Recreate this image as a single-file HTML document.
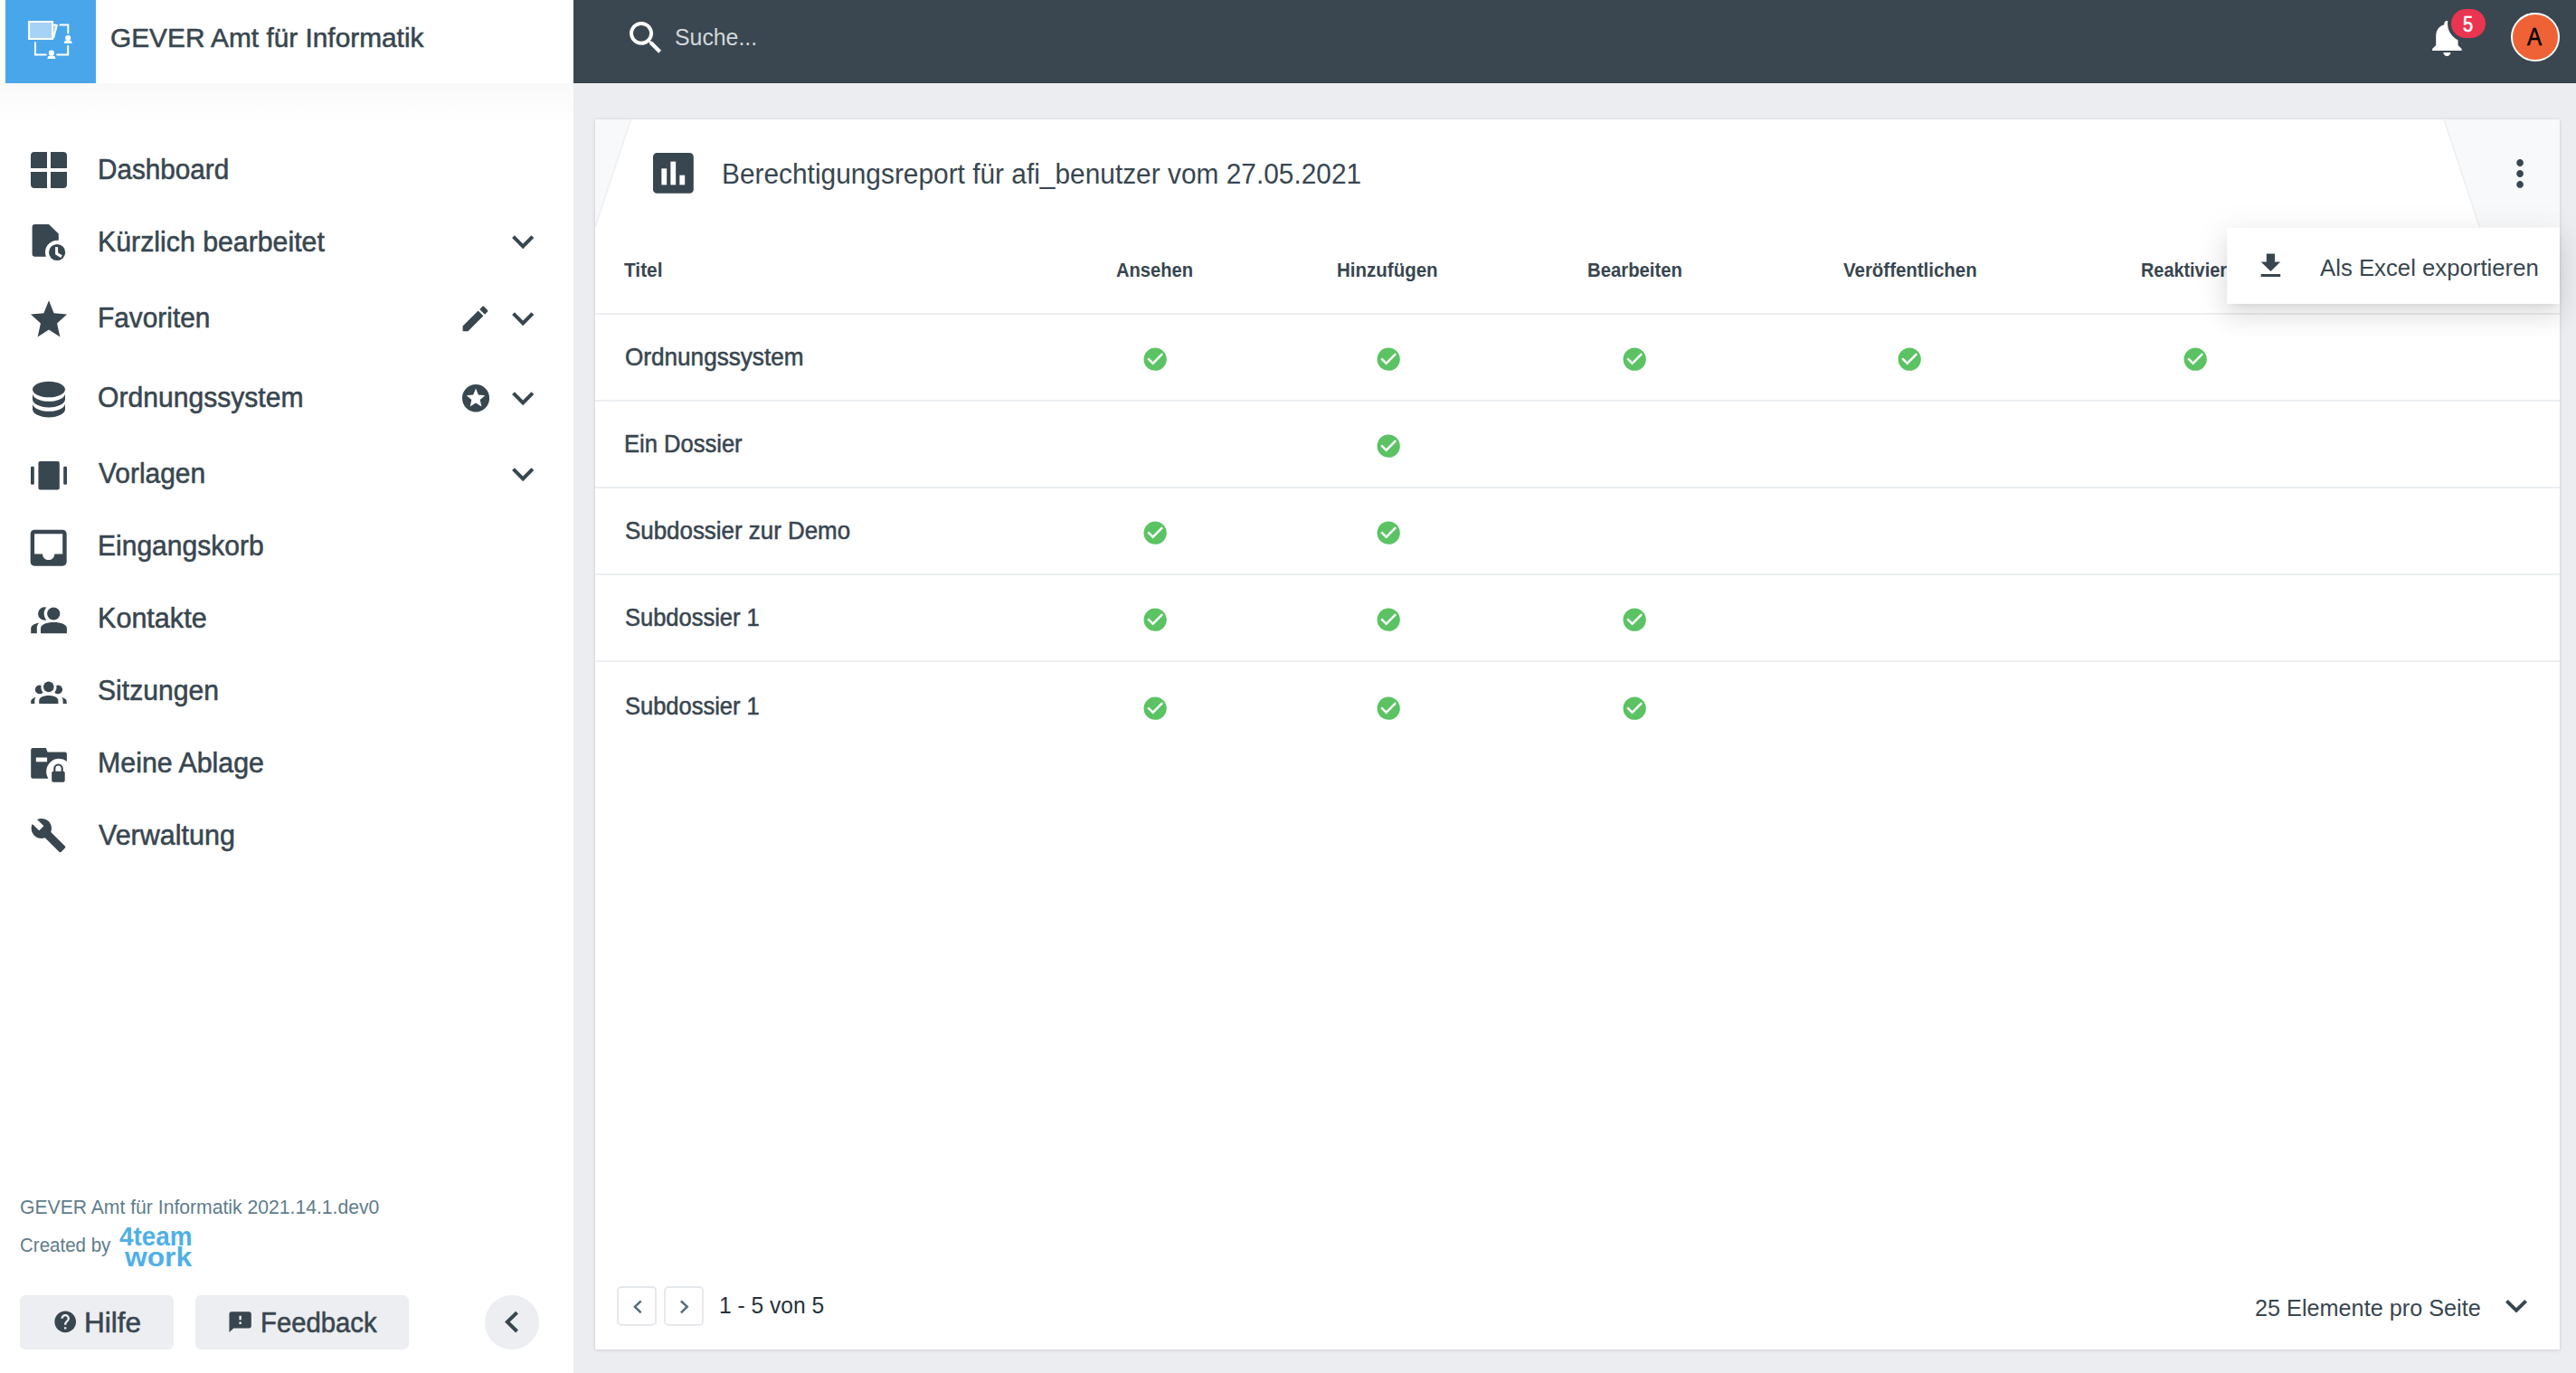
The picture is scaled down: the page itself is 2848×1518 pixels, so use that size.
<!DOCTYPE html>
<html><head><meta charset="utf-8">
<style>
*{margin:0;padding:0;box-sizing:border-box}
html,body{width:2848px;height:1518px;overflow:hidden;background:#ecedf0;font-family:"Liberation Sans",sans-serif;color:#38464f}
.t{position:absolute;white-space:nowrap;line-height:1}
.m{-webkit-text-stroke:0.55px currentColor}
svg{position:absolute;display:block;overflow:visible}
.bx{position:absolute}
</style></head><body>
<div class="bx" style="left:0;top:0;width:634px;height:1518px;background:#fff"></div>
<div class="bx" style="left:0;top:92px;width:634px;height:44px;background:linear-gradient(rgba(0,0,0,.022),rgba(0,0,0,0))"></div>
<div class="bx" style="left:6px;top:0;width:100px;height:92px;background:#4aa6ea"></div>
<svg style="left:26px;top:18px" width="60" height="54" viewBox="0 0 60 54" fill="#fff">
<path d="M6.1 6.1h25.9v18.9H6.1z" fill="#a6d2f5"/>
<path d="M33 9.4l3.6 0.8-3.6 13.4z" fill="#a6d2f5"/>
<path d="M6.1 6.1h25.9v18.9H6.1z" fill="none" stroke="#fff" stroke-width="2"/>
<path d="M33 9.3l3.8 0.8L33 24.6" fill="none" stroke="#fff" stroke-width="2" stroke-linejoin="miter"/>
<path d="M40.5 9.5h8.8v9" fill="none" stroke="#fff" stroke-width="2" stroke-linecap="round"/>
<path d="M49.2 33v9.6h-12" fill="none" stroke="#fff" stroke-width="2" stroke-linecap="round"/>
<path d="M13 29.3v13.3h11.8" fill="none" stroke="#fff" stroke-width="2" stroke-linecap="round"/>
<circle cx="49.2" cy="24" r="3.1" fill="#fff"/>
<path d="M45.8 27.1h6.8l1.3 3h-9.4z" fill="#fff"/>
<circle cx="30.9" cy="40.7" r="3.1" fill="#fff"/>
<path d="M27.5 44h6.8l1.3 3h-9.4z" fill="#fff"/>
</svg>
<div class="t m" id="hdr" style="left:122.01px;top:27.40px;font-size:30px;transform:scaleX(0.9943);transform-origin:0 0;">GEVER Amt für Informatik</div>
<div class="t m" id="n1" style="left:108.07px;top:172.81px;font-size:30.7px;transform:scaleX(0.9673);transform-origin:0 0;">Dashboard</div>
<div class="t m" id="n2" style="left:108.03px;top:253.31px;font-size:30.7px;transform:scaleX(0.9870);transform-origin:0 0;">Kürzlich bearbeitet</div>
<div class="t m" id="n3" style="left:108.05px;top:336.76px;font-size:30.7px;transform:scaleX(0.9728);transform-origin:0 0;">Favoriten</div>
<div class="t m" id="n4" style="left:108.40px;top:425.01px;font-size:30.7px;transform:scaleX(0.9809);transform-origin:0 0;">Ordnungssystem</div>
<div class="t m" id="n5" style="left:109.37px;top:509.01px;font-size:30.7px;transform:scaleX(0.9752);transform-origin:0 0;">Vorlagen</div>
<div class="t m" id="n6" style="left:108.04px;top:589.01px;font-size:30.7px;transform:scaleX(0.9789);transform-origin:0 0;">Eingangskorb</div>
<div class="t m" id="n7" style="left:108.01px;top:669.01px;font-size:30.7px;transform:scaleX(0.9958);transform-origin:0 0;">Kontakte</div>
<div class="t m" id="n8" style="left:108.40px;top:749.21px;font-size:30.7px;transform:scaleX(0.9813);transform-origin:0 0;">Sitzungen</div>
<div class="t m" id="n9" style="left:108.02px;top:829.01px;font-size:30.7px;transform:scaleX(0.9891);transform-origin:0 0;">Meine Ablage</div>
<div class="t m" id="n10" style="left:109.38px;top:908.61px;font-size:30.7px;transform:scaleX(0.9934);transform-origin:0 0;">Verwaltung</div>
<svg style="left:34px;top:168px" width="40" height="40" viewBox="0 0 40 40" fill="#38464f"><path d="M4 0h14v18H0V4a4 4 0 0 1 4-4zM22 0h14a4 4 0 0 1 4 4v14H22zM0 22h18v18H4a4 4 0 0 1-4-4zM22 22h18v14a4 4 0 0 1-4 4H22z"/></svg>
<svg style="left:30px;top:244px" width="50" height="50" viewBox="0 0 50 50" fill="#38464f"><path d="M8.5 4H24L34.8 14.6V21.8A13.2 13.2 0 0 0 20.9 39.7H8.5A2.9 2.9 0 0 1 5.6 36.8V6.9A2.9 2.9 0 0 1 8.5 4Z"/>
<circle cx="33.1" cy="35" r="9.1"/>
<path d="M32.6 29V36.4L38 39.6" fill="none" stroke="#fff" stroke-width="3"/></svg>
<svg style="left:30.00px;top:327.57px;" width="48.00" height="50.78" viewBox="0 0 24 24" preserveAspectRatio="none" fill="#38464f"><path d="M12 17.27L18.18 21l-1.64-7.03L22 9.24l-7.19-.61L12 2 9.19 8.63 2 9.24l5.46 4.73L5.82 21z"/></svg>
<svg style="left:27.00px;top:415.27px;" width="54.00" height="53.07" viewBox="0 0 24 24" preserveAspectRatio="none" fill="#38464f"><path d="M12,3C7.58,3 4,4.79 4,7C4,9.21 7.58,11 12,11C16.42,11 20,9.21 20,7C20,4.79 16.42,3 12,3M4,9V12C4,14.21 7.58,16 12,16C16.42,16 20,14.21 20,12V9C20,11.21 16.42,13 12,13C7.58,13 4,11.21 4,9M4,14V17C4,19.21 7.58,21 12,21C16.42,21 20,19.21 20,17V14C20,16.21 16.42,18 12,18C7.58,18 4,16.21 4,14Z"/></svg>
<svg style="left:34px;top:510px" width="40" height="32" viewBox="0 0 40 32" fill="#38464f"><rect x="8.4" y="0" width="23.4" height="31.6" rx="2"/><rect x="0" y="5.7" width="3.8" height="20.1" rx="1.2"/><rect x="36.2" y="5.7" width="3.8" height="20.1" rx="1.2"/></svg>
<svg style="left:27.33px;top:579.12px;" width="53.33" height="53.47" viewBox="0 0 24 24" preserveAspectRatio="none" fill="#38464f"><path d="M19 3H4.99c-1.11 0-1.98.89-1.98 2L3 19c0 1.1.88 2 1.99 2H19c1.1 0 2-.9 2-2V5c0-1.11-.9-2-2-2zm0 12h-4c0 1.66-1.35 3-3 3s-3-1.34-3-3H4.99V5H19v10z"/></svg>
<svg style="left:34px;top:668px" width="44" height="36" viewBox="0 0 44 36" fill="#38464f">
<circle cx="25.25" cy="10.5" r="7.1"/>
<path d="M17.16 3.62A7.2 7.2 0 1 0 17.16 17.48A10.65 10.65 0 0 1 17.16 3.62Z"/>
<path d="M11 32.2v-5.5c0-4.5 6.4-6.8 14.45-6.8S39.9 22.2 39.9 26.7v5.5z"/>
<path d="M0.2 32.2v-5c0-3 2.5-5.3 9.2-6.6c-1.9 1.7-2.6 3.6-2.6 6v5.6z"/>
</svg>
<svg style="left:34px;top:748px" width="44" height="32" viewBox="0 0 44 32" fill="#38464f">
<circle cx="19.8" cy="11.4" r="5.8"/>
<path d="M8 9.8a4.9 4.9 0 1 0 5.6 7.6a8 8 0 0 1-1.9-7.4a4.9 4.9 0 0 0-3.7-0.2z"/>
<path d="M31.9 9.8a4.9 4.9 0 1 1-5.6 7.6a8 8 0 0 0 1.9-7.4a4.9 4.9 0 0 1 3.7-0.2z"/>
<path d="M9.2 29.9v-3.5c0-3.4 4.8-5.5 10.6-5.5s10.6 2.1 10.6 5.5v3.5z"/>
<path d="M0.2 29.9v-2.4c0-2.2 2-3.6 5.5-4.7c-0.9 1.2-1.4 2.6-1.4 4.2v2.9z"/>
<path d="M39.7 29.9v-2.4c0-2.2-2-3.6-5.5-4.7c0.9 1.2 1.4 2.6 1.4 4.2v2.9z"/>
</svg>
<svg style="left:34px;top:826px" width="44" height="40" viewBox="0 0 44 40" fill="#38464f">
<path d="M2.2 1.1h14.6l1.8 4.3h19.3a2 2 0 0 1 2 2v8.3a14.2 14.2 0 0 0-20.5 19h-17.2a2 2 0 0 1-2-2V3.1a2 2 0 0 1 2-2z"/>
<rect x="5.8" y="11.5" width="12.3" height="4.8" fill="#fff"/>
<rect x="23.2" y="26.7" width="14.5" height="12" rx="1.8"/>
<path d="M26.3 27v-3.3a4.2 4.2 0 0 1 8.4 0v3.3" fill="none" stroke="#38464f" stroke-width="2.2"/>
</svg>
<svg style="left:33.12px;top:903.12px;" width="41.08" height="40.97" viewBox="0 0 24 24" preserveAspectRatio="none" fill="#38464f"><path d="M22.7 19l-9.1-9.1c.9-2.3.4-5-1.5-6.9-2-2-5-2.4-7.4-1.3L9 6 6 9 1.6 4.7C.4 7.1.9 10.1 2.9 12.1c1.9 1.9 4.6 2.4 6.9 1.5l9.1 9.1c.4.4 1 .4 1.4 0l2.3-2.3c.5-.4.5-1.1.1-1.4z"/></svg>
<svg style="left:553.90px;top:243.48px;" width="48.40" height="48.26" viewBox="0 0 24 24" preserveAspectRatio="none" fill="#38464f"><path d="M16.59 8.59L12 13.17 7.41 8.59 6 10l6 6 6-6z"/></svg>
<svg style="left:553.90px;top:327.78px;" width="48.40" height="48.26" viewBox="0 0 24 24" preserveAspectRatio="none" fill="#38464f"><path d="M16.59 8.59L12 13.17 7.41 8.59 6 10l6 6 6-6z"/></svg>
<svg style="left:553.90px;top:416.08px;" width="48.40" height="48.26" viewBox="0 0 24 24" preserveAspectRatio="none" fill="#38464f"><path d="M16.59 8.59L12 13.17 7.41 8.59 6 10l6 6 6-6z"/></svg>
<svg style="left:553.90px;top:499.78px;" width="48.40" height="48.26" viewBox="0 0 24 24" preserveAspectRatio="none" fill="#38464f"><path d="M16.59 8.59L12 13.17 7.41 8.59 6 10l6 6 6-6z"/></svg>
<svg style="left:507.38px;top:333.68px;" width="36.95" height="36.93" viewBox="0 0 24 24" preserveAspectRatio="none" fill="#38464f"><path d="M3 17.25V21h3.75L17.81 9.94l-3.75-3.75L3 17.25zM20.71 7.04c.39-.39.39-1.02 0-1.41l-2.34-2.34c-.39-.39-1.02-.39-1.41 0l-1.83 1.83 3.75 3.75 1.83-1.83z"/></svg>
<svg style="left:507.79px;top:421.85px;" width="36.12" height="36.60" viewBox="0 0 24 24" preserveAspectRatio="none" fill="#38464f"><path d="M16.23,18L12,15.45L7.77,18L8.89,13.19L5.16,9.96L10.08,9.54L12,5L13.92,9.53L18.84,9.95L15.11,13.18L16.23,18M12,2C6.47,2 2,6.5 2,12A10,10 0 0,0 12,22A10,10 0 0,0 22,12A10,10 0 0,0 12,2Z"/></svg>
<div class="t" id="ver" style="left:22.04px;top:1324.08px;font-size:22px;transform:scaleX(0.9612);transform-origin:0 0;color:#607d8b">GEVER Amt für Informatik 2021.14.1.dev0</div>
<div class="t" id="cby" style="left:22.07px;top:1365.88px;font-size:22px;transform:scaleX(0.9318);transform-origin:0 0;color:#607d8b">Created by</div>
<div class="t" id="l4t" style="left:132.00px;top:1351.61px;font-size:30px;transform:scaleX(0.9282);transform-origin:0 0;color:#4fb0e5;font-weight:bold">4team</div>
<div class="t" id="lwk" style="left:137.78px;top:1374.61px;font-size:30px;transform:scaleX(1.0586);transform-origin:0 0;color:#4fb0e5;font-weight:bold">work</div>
<div class="bx" style="left:22px;top:1432px;width:170px;height:60px;background:#eceef1;border-radius:6px"></div>
<div class="bx" style="left:216px;top:1432px;width:236px;height:60px;background:#eceef1;border-radius:6px"></div>
<div class="bx" style="left:536px;top:1432px;width:60px;height:60px;background:#eceef1;border-radius:50%"></div>
<svg style="left:57.63px;top:1447.42px;" width="28.44" height="28.56" viewBox="0 0 24 24" preserveAspectRatio="none" fill="#38464f"><path d="M12 2C6.48 2 2 6.48 2 12s4.48 10 10 10 10-4.48 10-10S17.52 2 12 2zm1 17h-2v-2h2v2zm2.07-7.75l-.9.92C13.45 12.9 13 13.5 13 15h-2v-.5c0-1.1.45-2.1 1.17-2.83l1.24-1.26c.37-.36.59-.86.59-1.41 0-1.1-.9-2-2-2s-2 .9-2 2H8c0-2.21 1.79-4 4-4s4 1.79 4 4c0 .88-.36 1.68-.93 2.25z"/></svg>
<svg style="left:251.36px;top:1448.03px;" width="29.28" height="27.24" viewBox="0 0 24 24" preserveAspectRatio="none" fill="#38464f"><path d="M20 2H4c-1.1 0-1.99.9-1.99 2L2 22l4-4h14c1.1 0 2-.9 2-2V4c0-1.1-.9-2-2-2zm-7 12h-2v-2h2v2zm0-4h-2V6h2v4z"/></svg>
<svg style="left:541.91px;top:1438.20px;" width="48.26" height="47.20" viewBox="0 0 24 24" preserveAspectRatio="none" fill="#38464f"><path d="M15.41 7.41L14 6l-6 6 6 6 1.41-1.41L10.83 12z"/></svg>
<div class="t m" id="hlf" style="left:93.31px;top:1446.93px;font-size:30.5px;transform:scaleX(1.0345);transform-origin:0 0;">Hilfe</div>
<div class="t m" id="fdb" style="left:288.25px;top:1446.93px;font-size:30.5px;transform:scaleX(0.9602);transform-origin:0 0;">Feedback</div>
<div class="bx" style="left:634px;top:0;width:2214px;height:92px;background:#3a4750;border-bottom:1px solid #334047"></div>
<div class="bx" style="left:634px;top:92px;width:2214px;height:1px;background:#f3f4f6"></div>
<svg style="left:689.58px;top:17.85px;" width="48.16" height="47.62" viewBox="0 0 24 24" preserveAspectRatio="none" fill="#fff"><path d="M15.5 14h-.79l-.28-.27C15.41 12.59 16 11.11 16 9.5 16 5.91 13.09 3 9.5 3S3 5.91 3 9.5 5.91 16 9.5 16c1.61 0 3.09-.59 4.23-1.57l.27.28v.79l5 4.99L20.49 19l-4.99-5zm-6 0C7.01 14 5 11.99 5 9.5S7.01 5 9.5 5 14 7.01 14 9.5 11.99 14 9.5 14z"/></svg>
<div class="t" id="srch" style="left:746.06px;top:28.37px;font-size:26.5px;transform:scaleX(0.9372);transform-origin:0 0;color:#d3d7da">Suche...</div>
<svg style="left:2681.38px;top:18.00px;" width="48.75" height="48.00" viewBox="0 0 24 24" preserveAspectRatio="none" fill="#fff"><path d="M12 22c1.1 0 2-.9 2-2h-4c0 1.1.89 2 2 2zm6-6v-5c0-3.07-1.64-5.64-4.5-6.32V4c0-.83-.67-1.5-1.5-1.5s-1.5.67-1.5 1.5v.68C7.63 5.36 6 7.92 6 11v5l-2 2v1h16v-1l-2-2z"/></svg>
<div class="bx" style="left:2706px;top:5.6px;width:46px;height:40.4px;background:#ea3550;border:4px solid #3a4750;border-radius:20px"></div>
<div class="t m" id="bdg" style="left:2723.08px;top:14.88px;font-size:24px;transform:scaleX(0.8308);transform-origin:0 0;color:#fff">5</div>
<div class="bx" style="left:2776px;top:13.8px;width:54px;height:54px;background:#ee6236;border:2.5px solid #fff;border-radius:50%"></div>
<div class="t m" id="av" style="left:2793.89px;top:28.04px;font-size:27px;transform:scaleX(0.8900);transform-origin:0 0;color:#000">A</div>
<div class="bx" style="left:658px;top:132px;width:2172px;height:1360px;background:#fff;box-shadow:0 1px 4px rgba(0,0,0,.10),0 0 2px rgba(0,0,0,.08)"></div>
<svg style="left:658px;top:132px" width="2172" height="120" viewBox="0 0 2172 120" fill="#38464f">
<path d="M0 0H39.5L0 119z" fill="#f8f9fb"/>
<path d="M39.5 0L0 119" stroke="#eceff2" stroke-width="1.5" fill="none"/>
<path d="M2044 0H2172V119H2083.5z" fill="#f8f9fb"/>
<path d="M2044 0L2083.5 119" stroke="#eceff2" stroke-width="1.5" fill="none"/>
</svg>
<svg style="left:721.65px;top:169.4px" width="45" height="45" viewBox="0 0 45 45" fill="#38464f"><path d="M4.4 0h36a4.4 4.4 0 0 1 4.4 4.4v36a4.4 4.4 0 0 1-4.4 4.4h-36A4.4 4.4 0 0 1 0 40.4v-36A4.4 4.4 0 0 1 4.4 0z"/><rect x="9.35" y="17.3" width="5.8" height="18.1" fill="#fff"/><rect x="19.35" y="9.6" width="5.8" height="25.8" fill="#fff"/><rect x="29.35" y="24.7" width="5.8" height="10.7" fill="#fff"/></svg>
<div class="t" id="ttl" style="left:798.45px;top:176.56px;font-size:31px;transform:scaleX(0.9632);transform-origin:0 0;">Berechtigungsreport für afi_benutzer vom 27.05.2021</div>
<svg style="left:2762.90px;top:168.03px;" width="46.20" height="47.85" viewBox="0 0 24 24" preserveAspectRatio="none" fill="#38464f"><path d="M12 8c1.1 0 2-.9 2-2s-.9-2-2-2-2 .9-2 2 .9 2 2 2zm0 2c-1.1 0-2 .9-2 2s.9 2 2 2 2-.9 2-2-.9-2-2-2zm0 6c-1.1 0-2 .9-2 2s.9 2 2 2 2-.9 2-2-.9-2-2-2z"/></svg>
<div class="t" id="h0" style="left:690.38px;top:288.70px;font-size:21.5px;transform:scaleX(0.9698);transform-origin:0 0;font-weight:bold">Titel</div>
<div class="t" id="h1" style="left:1234.44px;top:288.70px;font-size:21.5px;transform:scaleX(0.9371);transform-origin:0 0;font-weight:bold">Ansehen</div>
<div class="t" id="h2" style="left:1478.26px;top:288.70px;font-size:21.5px;transform:scaleX(0.9539);transform-origin:0 0;font-weight:bold">Hinzufügen</div>
<div class="t" id="h3" style="left:1755.08px;top:288.70px;font-size:21.5px;transform:scaleX(0.9440);transform-origin:0 0;font-weight:bold">Bearbeiten</div>
<div class="t" id="h4" style="left:2038.16px;top:288.70px;font-size:21.5px;transform:scaleX(0.9510);transform-origin:0 0;font-weight:bold">Veröffentlichen</div>
<div class="t" id="h5" style="left:2367.45px;top:288.70px;font-size:21.5px;transform:scaleX(0.9238);transform-origin:0 0;font-weight:bold">Reaktivieren</div>
<div class="bx" style="left:658px;top:345.5px;width:2172px;height:2px;background:#eceff1"></div>
<div class="t m" id="r0" style="left:691.02px;top:381.94px;font-size:27px;transform:scaleX(0.9675);transform-origin:0 0;">Ordnungssystem</div>
<div class="bx" style="left:658px;top:441.5px;width:2172px;height:2px;background:#eceff1"></div>
<svg style="left:1262.02px;top:381.72px;" width="30.36" height="30.36" viewBox="0 0 24 24" preserveAspectRatio="none" fill="#5bc363"><path d="M12 2C6.48 2 2 6.48 2 12s4.48 10 10 10 10-4.48 10-10S17.52 2 12 2zm-2 15l-5-5 1.41-1.41L10 14.17l7.59-7.59L19 8l-9 9z"/></svg>
<svg style="left:1519.72px;top:381.72px;" width="30.36" height="30.36" viewBox="0 0 24 24" preserveAspectRatio="none" fill="#5bc363"><path d="M12 2C6.48 2 2 6.48 2 12s4.48 10 10 10 10-4.48 10-10S17.52 2 12 2zm-2 15l-5-5 1.41-1.41L10 14.17l7.59-7.59L19 8l-9 9z"/></svg>
<svg style="left:1791.72px;top:381.72px;" width="30.36" height="30.36" viewBox="0 0 24 24" preserveAspectRatio="none" fill="#5bc363"><path d="M12 2C6.48 2 2 6.48 2 12s4.48 10 10 10 10-4.48 10-10S17.52 2 12 2zm-2 15l-5-5 1.41-1.41L10 14.17l7.59-7.59L19 8l-9 9z"/></svg>
<svg style="left:2096.02px;top:381.72px;" width="30.36" height="30.36" viewBox="0 0 24 24" preserveAspectRatio="none" fill="#5bc363"><path d="M12 2C6.48 2 2 6.48 2 12s4.48 10 10 10 10-4.48 10-10S17.52 2 12 2zm-2 15l-5-5 1.41-1.41L10 14.17l7.59-7.59L19 8l-9 9z"/></svg>
<svg style="left:2411.52px;top:381.72px;" width="30.36" height="30.36" viewBox="0 0 24 24" preserveAspectRatio="none" fill="#5bc363"><path d="M12 2C6.48 2 2 6.48 2 12s4.48 10 10 10 10-4.48 10-10S17.52 2 12 2zm-2 15l-5-5 1.41-1.41L10 14.17l7.59-7.59L19 8l-9 9z"/></svg>
<div class="t m" id="r1" style="left:690.08px;top:477.94px;font-size:27px;transform:scaleX(0.9460);transform-origin:0 0;">Ein Dossier</div>
<div class="bx" style="left:658px;top:537.5px;width:2172px;height:2px;background:#eceff1"></div>
<svg style="left:1519.72px;top:477.72px;" width="30.36" height="30.36" viewBox="0 0 24 24" preserveAspectRatio="none" fill="#5bc363"><path d="M12 2C6.48 2 2 6.48 2 12s4.48 10 10 10 10-4.48 10-10S17.52 2 12 2zm-2 15l-5-5 1.41-1.41L10 14.17l7.59-7.59L19 8l-9 9z"/></svg>
<div class="t m" id="r2" style="left:691.02px;top:573.94px;font-size:27px;transform:scaleX(0.9595);transform-origin:0 0;">Subdossier zur Demo</div>
<div class="bx" style="left:658px;top:633.5px;width:2172px;height:2px;background:#eceff1"></div>
<svg style="left:1262.02px;top:573.72px;" width="30.36" height="30.36" viewBox="0 0 24 24" preserveAspectRatio="none" fill="#5bc363"><path d="M12 2C6.48 2 2 6.48 2 12s4.48 10 10 10 10-4.48 10-10S17.52 2 12 2zm-2 15l-5-5 1.41-1.41L10 14.17l7.59-7.59L19 8l-9 9z"/></svg>
<svg style="left:1519.72px;top:573.72px;" width="30.36" height="30.36" viewBox="0 0 24 24" preserveAspectRatio="none" fill="#5bc363"><path d="M12 2C6.48 2 2 6.48 2 12s4.48 10 10 10 10-4.48 10-10S17.52 2 12 2zm-2 15l-5-5 1.41-1.41L10 14.17l7.59-7.59L19 8l-9 9z"/></svg>
<div class="t m" id="r3" style="left:691.03px;top:669.94px;font-size:27px;transform:scaleX(0.9439);transform-origin:0 0;">Subdossier 1</div>
<div class="bx" style="left:658px;top:729.5px;width:2172px;height:2px;background:#eceff1"></div>
<svg style="left:1262.02px;top:669.72px;" width="30.36" height="30.36" viewBox="0 0 24 24" preserveAspectRatio="none" fill="#5bc363"><path d="M12 2C6.48 2 2 6.48 2 12s4.48 10 10 10 10-4.48 10-10S17.52 2 12 2zm-2 15l-5-5 1.41-1.41L10 14.17l7.59-7.59L19 8l-9 9z"/></svg>
<svg style="left:1519.72px;top:669.72px;" width="30.36" height="30.36" viewBox="0 0 24 24" preserveAspectRatio="none" fill="#5bc363"><path d="M12 2C6.48 2 2 6.48 2 12s4.48 10 10 10 10-4.48 10-10S17.52 2 12 2zm-2 15l-5-5 1.41-1.41L10 14.17l7.59-7.59L19 8l-9 9z"/></svg>
<svg style="left:1791.72px;top:669.72px;" width="30.36" height="30.36" viewBox="0 0 24 24" preserveAspectRatio="none" fill="#5bc363"><path d="M12 2C6.48 2 2 6.48 2 12s4.48 10 10 10 10-4.48 10-10S17.52 2 12 2zm-2 15l-5-5 1.41-1.41L10 14.17l7.59-7.59L19 8l-9 9z"/></svg>
<div class="t m" id="r4" style="left:691.03px;top:767.94px;font-size:27px;transform:scaleX(0.9439);transform-origin:0 0;">Subdossier 1</div>
<svg style="left:1262.02px;top:767.72px;" width="30.36" height="30.36" viewBox="0 0 24 24" preserveAspectRatio="none" fill="#5bc363"><path d="M12 2C6.48 2 2 6.48 2 12s4.48 10 10 10 10-4.48 10-10S17.52 2 12 2zm-2 15l-5-5 1.41-1.41L10 14.17l7.59-7.59L19 8l-9 9z"/></svg>
<svg style="left:1519.72px;top:767.72px;" width="30.36" height="30.36" viewBox="0 0 24 24" preserveAspectRatio="none" fill="#5bc363"><path d="M12 2C6.48 2 2 6.48 2 12s4.48 10 10 10 10-4.48 10-10S17.52 2 12 2zm-2 15l-5-5 1.41-1.41L10 14.17l7.59-7.59L19 8l-9 9z"/></svg>
<svg style="left:1791.72px;top:767.72px;" width="30.36" height="30.36" viewBox="0 0 24 24" preserveAspectRatio="none" fill="#5bc363"><path d="M12 2C6.48 2 2 6.48 2 12s4.48 10 10 10 10-4.48 10-10S17.52 2 12 2zm-2 15l-5-5 1.41-1.41L10 14.17l7.59-7.59L19 8l-9 9z"/></svg>
<div class="bx" style="left:2462px;top:252px;width:368px;height:84px;background:#fff;box-shadow:0 4px 8px -4px rgba(0,0,0,.10),0 14px 24px 2px rgba(0,0,0,.07),0 6px 36px 6px rgba(0,0,0,.06)"></div>
<svg style="left:2491.52px;top:276.02px;" width="36.86" height="35.86" viewBox="0 0 24 24" preserveAspectRatio="none" fill="#38464f"><path d="M19 9h-4V3H9v6H5l7 7 7-7zM5 18v2h14v-2H5z"/></svg>
<div class="t" id="xls" style="left:2564.59px;top:282.64px;font-size:26.3px;transform:scaleX(0.9789);transform-origin:0 0;">Als Excel exportieren</div>
<div class="bx" style="left:682px;top:1422px;width:43.5px;height:43.5px;border:2px solid #e6e9ec;border-radius:5px"></div>
<div class="bx" style="left:734px;top:1422px;width:43.5px;height:43.5px;border:2px solid #e6e9ec;border-radius:5px"></div>
<svg style="left:689.95px;top:1430.20px;" width="30.45" height="29.60" viewBox="0 0 24 24" preserveAspectRatio="none" fill="#546e7a"><path d="M15.41 7.41L14 6l-6 6 6 6 1.41-1.41L10.83 12z"/></svg>
<svg style="left:741.49px;top:1430.20px;" width="30.77" height="29.60" viewBox="0 0 24 24" preserveAspectRatio="none" fill="#546e7a"><path d="M10 6L8.59 7.41 13.17 12l-4.58 4.59L10 18l6-6z"/></svg>
<div class="t" id="pg" style="left:794.68px;top:1430.44px;font-size:26.3px;transform:scaleX(0.9344);transform-origin:0 0;color:#263238">1 - 5 von 5</div>
<div class="t" id="pps" style="left:2492.65px;top:1432.74px;font-size:26.3px;transform:scaleX(0.9597);transform-origin:0 0;">25 Elemente pro Seite</div>
<svg style="left:2758.00px;top:1420.08px;" width="48.00" height="47.29" viewBox="0 0 24 24" preserveAspectRatio="none" fill="#38464f"><path d="M16.59 8.59L12 13.17 7.41 8.59 6 10l6 6 6-6z"/></svg>
</body></html>
